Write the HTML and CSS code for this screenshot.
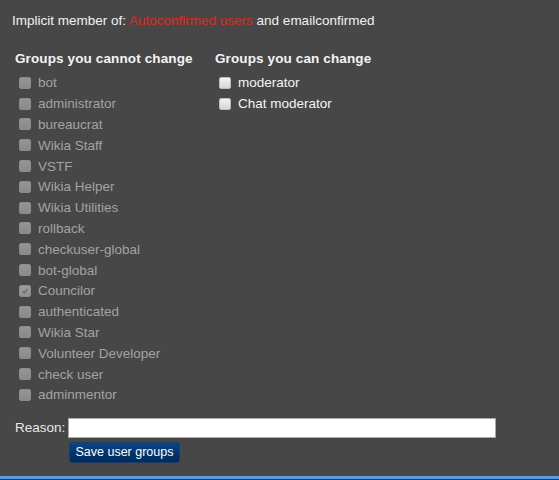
FILE: index.html
```html
<!DOCTYPE html>
<html>
<head>
<meta charset="utf-8">
<link rel="stylesheet" href="styles.css">
</head>
<body>
<div class="page">
  <p class="implicit">Implicit member of: <a class="redlink">Autoconfirmed users</a> and emailconfirmed</p>
  <div class="groups">
    <div class="col col-left">
      <h4 class="col-title">Groups you cannot change</h4>
      <ul class="list">
        <li class="row disabled"><span class="box"></span>bot</li>
        <li class="row disabled"><span class="box"></span>administrator</li>
        <li class="row disabled"><span class="box"></span>bureaucrat</li>
        <li class="row disabled"><span class="box"></span>Wikia Staff</li>
        <li class="row disabled"><span class="box"></span>VSTF</li>
        <li class="row disabled"><span class="box"></span>Wikia Helper</li>
        <li class="row disabled"><span class="box"></span>Wikia Utilities</li>
        <li class="row disabled"><span class="box"></span>rollback</li>
        <li class="row disabled"><span class="box"></span>checkuser-global</li>
        <li class="row disabled"><span class="box"></span>bot-global</li>
        <li class="row disabled"><span class="box checked"><svg viewBox="0 0 12 12" width="12" height="12"><path d="M3 6.2 L5 8.4 L9 3.6" fill="none" stroke="#6e6e6e" stroke-width="1.7"/></svg></span>Councilor</li>
        <li class="row disabled"><span class="box"></span>authenticated</li>
        <li class="row disabled"><span class="box"></span>Wikia Star</li>
        <li class="row disabled"><span class="box"></span>Volunteer Developer</li>
        <li class="row disabled"><span class="box"></span>check user</li>
        <li class="row disabled"><span class="box"></span>adminmentor</li>
      </ul>
    </div>
    <div class="col col-right">
      <h4 class="col-title">Groups you can change</h4>
      <ul class="list">
        <li class="row enabled"><span class="box"></span>moderator</li>
        <li class="row enabled"><span class="box"></span>Chat moderator</li>
      </ul>
    </div>
  </div>
  <div class="reason">
    <label class="reason-label">Reason:</label>
    <span class="reason-input"></span>
  </div>
  <div class="actions">
    <span class="btn">Save user groups</span>
  </div>
</div>
<div class="footer-line"></div>
</body>
</html>
```

FILE: styles.css
```css
html, body {
  margin: 0;
  padding: 0;
  background: #474747;
  height: 480px;
  overflow: hidden;
}
body {
  font-family: "Liberation Sans", Arial, sans-serif;
  font-size: 13.5px;
  color: #f2f2f2;
  position: relative;
}
.page {
  padding: 13px 0 0 12px;
}
.implicit {
  margin: 0;
  line-height: 16px;
}
.redlink {
  color: #e0281e;
}
.groups {
  display: flex;
  margin-top: 22px;
  padding-left: 3px;
}
.col-left {
  width: 200px;
}
.col-title {
  margin: 0;
  font-size: 13.5px;
  font-weight: bold;
  line-height: 16px;
  letter-spacing: 0.12px;
  color: #f4f4f4;
}
.list {
  list-style: none;
  margin: 6px 0 0 0;
  padding: 0;
}
.row {
  display: flex;
  align-items: center;
  height: 20.8px;
  line-height: 16px;
}
.box {
  width: 12px;
  height: 12px;
  margin: 0 7px 1px 4px;
  border-radius: 2px;
  box-sizing: border-box;
  flex: none;
  display: flex;
  align-items: center;
  justify-content: center;
}
.disabled {
  color: #a3a3a3;
}
.disabled .box {
  background: linear-gradient(#959595, #8a8a8a);
  border: 1px solid #8c8c8c;
}
.disabled .box.checked {
  background: linear-gradient(#9c9c9c, #929292);
}
.enabled {
  color: #f5f5f5;
}
.enabled .box {
  background: linear-gradient(#f2f2f2, #d6d6d6);
  border: 1px solid #bdbdbd;
}
.reason {
  display: flex;
  align-items: center;
  margin-top: 12px;
  padding-left: 3px;
}
.reason-label {
  color: #e8e8e8;
  width: 53px;
  line-height: 16px;
}
.reason-input {
  display: block;
  width: 428px;
  height: 20px;
  box-sizing: border-box;
  background: #ffffff;
  border: 1px solid #a9a9a9;
}
.actions {
  padding-left: 57px;
  margin-top: 4px;
}
.btn {
  display: inline-block;
  width: 111px;
  height: 21px;
  box-sizing: border-box;
  border-radius: 3px;
  background: linear-gradient(#0b4584, #00336a 60%, #002c5e);
  border: 1px solid #1c3e66;
  color: #ffffff;
  font-size: 12.5px;
  line-height: 19px;
  text-align: center;
}
.footer-line {
  position: absolute;
  left: 0;
  right: 0;
  top: 476px;
  height: 3px;
  background: #5b9bd9;
  border-bottom: 1px solid #2d3a48;
}
```
